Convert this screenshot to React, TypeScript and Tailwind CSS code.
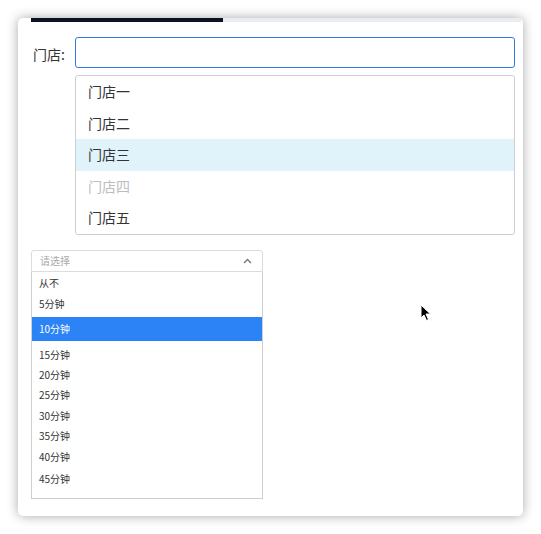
import React from "react";

const font = { fontFamily: '"Noto Sans CJK SC", "Noto Sans", sans-serif' };

const stores = [
  { name: "门店一", state: "normal" },
  { name: "门店二", state: "normal" },
  { name: "门店三", state: "hover" },
  { name: "门店四", state: "disabled" },
  { name: "门店五", state: "normal" },
];

const times: { label: string; h: string; active?: boolean; mt?: string }[] = [
  { label: "从不", h: "h-[22px]" },
  { label: "5分钟", h: "h-[20px]" },
  { label: "10分钟", h: "h-[24px]", active: true, mt: "mt-[3px]" },
  { label: "15分钟", h: "h-[20px]", mt: "mt-[4px]" },
  { label: "20分钟", h: "h-[20px]" },
  { label: "25分钟", h: "h-[20px]" },
  { label: "30分钟", h: "h-[21px]" },
  { label: "35分钟", h: "h-[20px]" },
  { label: "40分钟", h: "h-[22px]" },
  { label: "45分钟", h: "h-[22px]" },
];

export default function App() {
  return (
    <div className="relative w-[541px] h-[534px] bg-white" style={font}>
      <div className="absolute left-[18px] top-[18px] w-[505px] h-[498px] rounded-[5px] bg-white shadow-[0_0_12px_rgba(0,0,0,0.35)] overflow-hidden">
        <div className="ml-[13px] flex h-[4px] w-[490px] bg-[#e9ecf0]">
          <div className="h-full w-[192px] bg-[#0b1424]" />
        </div>
        <div className="mt-[15px] flex items-center pl-[15px] pr-[8px]">
          <div className="w-[42px] pt-[3px] text-[14px] text-[#333]">门店:</div>
          <div className="h-[31px] flex-1 rounded-[3px] border border-[#2f7de1] bg-white" />
        </div>
        <div className="ml-[57px] mr-[8px] mt-[7px] rounded-[3px] border border-[#cfcfcf] bg-white">
          {stores.map((s) => (
            <div
              key={s.name}
              className={
                "flex h-[31.5px] items-center pl-[12px] text-[14px] " +
                (s.state === "hover"
                  ? "bg-[#e0f3fb] text-[#333]"
                  : s.state === "disabled"
                  ? "text-[#bdbdbd]"
                  : "text-[#333]")
              }
            >
              {s.name}
            </div>
          ))}
        </div>
        <div className="ml-[13px] mt-[15px] w-[232px]">
          <div className="flex h-[22px] items-center justify-between rounded-t-[3px] border border-[#dcdcdc] pl-[8px] pr-[10px]">
            <span className="text-[10px] text-[#aaa]">请选择</span>
            <svg width="9" height="6" viewBox="0 0 9 6">
              <path d="M1 5 L4.5 1.5 L8 5" fill="none" stroke="#777" strokeWidth="1.4" />
            </svg>
          </div>
          <div className="h-[227px] border-x border-b border-[#cfcfcf]">
            {times.map((t) => (
              <div
                key={t.label}
                className={
                  "flex items-center pl-[7px] text-[10px] " +
                  t.h +
                  " " +
                  (t.mt ?? "") +
                  " " +
                  (t.active ? "bg-[#2b83f6] text-white" : "text-[#333]")
                }
              >
                {t.label}
              </div>
            ))}
          </div>
        </div>
      </div>
      <svg
        className="absolute left-[420px] top-[304px]"
        width="12"
        height="18"
        viewBox="0 0 12 18"
      >
        <path
          d="M1 1 L1 14 L4 11 L6.5 16.5 L8.5 15.5 L6 10 L10.5 10 Z"
          fill="#000"
          stroke="#fff"
          strokeWidth="1"
          strokeLinejoin="round"
        />
      </svg>
    </div>
  );
}
